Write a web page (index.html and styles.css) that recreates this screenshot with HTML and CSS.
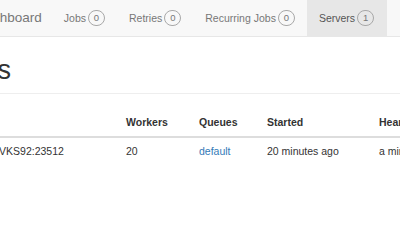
FILE: index.html
```html
<!DOCTYPE html>
<html>
<head>
<meta charset="utf-8">
<link rel="stylesheet" href="styles.css">
</head>
<body>
<nav class="navbar">
  <div class="navbar-inner">
    <a class="brand" href="#">Hangfire Dashboard</a>
    <ul class="nav">
      <li><a href="#">Jobs<span class="badge">0</span></a></li>
      <li><a href="#">Retries<span class="badge">0</span></a></li>
      <li><a href="#">Recurring Jobs<span class="badge">0</span></a></li>
      <li class="active"><a href="#">Servers<span class="badge">1</span></a></li>
    </ul>
  </div>
</nav>
<main class="container">
  <h1 class="page-header">Servers</h1>
  <table class="table">
    <colgroup>
      <col class="c-name"><col class="c-workers"><col class="c-queues"><col class="c-started"><col class="c-heart">
    </colgroup>
    <thead>
      <tr><th>Name</th><th>Workers</th><th>Queues</th><th>Started</th><th>Heartbeat</th></tr>
    </thead>
    <tbody>
      <tr><td>DESKTOP-ABCVKS92:23512</td><td>20</td><td><a href="#">default</a></td><td>20 minutes ago</td><td>a minute ago</td></tr>
    </tbody>
  </table>
</main>
</body>
</html>
```
FILE: styles.css
```css
html, body {
  margin: 0;
  padding: 0;
  overflow: hidden;
  background: #fff;
}
body {
  font-family: "Liberation Sans", Arial, sans-serif;
  font-size: 10.5px;
  line-height: 15px;
  color: #333;
  width: 400px;
  height: 250px;
}
a { text-decoration: none; }

.navbar {
  background: #f8f8f8;
  border-bottom: 1px solid #e7e7e7;
  height: 36px;
  white-space: nowrap;
}
.navbar-inner {
  display: flex;
  align-items: stretch;
  height: 36px;
  margin-left: -79px;
}
.brand {
  font-size: 13.5px;
  line-height: 36px;
  color: #777;
  padding: 0 10px 0 0;
}
.nav {
  display: flex;
  list-style: none;
  margin: 0;
  padding: 0;
}
.nav li a {
  display: flex;
  align-items: center;
  height: 36px;
  padding: 0 12px;
  color: #777;
}
.nav li.active a {
  background: #e7e7e7;
  color: #555;
  padding-right: 13px;
}
.badge {
  display: inline-flex;
  align-items: center;
  justify-content: center;
  box-sizing: border-box;
  width: 17px;
  height: 16px;
  margin-left: 2px;
  border: 1px solid #a8a8a8;
  border-radius: 8px;
  font-size: 9.5px;
  line-height: 1;
  color: #777;
  background: transparent;
}

.container {
  margin-left: -82px;
  width: 700px;
}
.page-header {
  margin: 19px 0 15px 0;
  padding-bottom: 7px;
  border-bottom: 1px solid #eee;
  font-size: 27px;
  font-weight: 500;
  line-height: 29.7px;
  color: #333;
}
.table {
  border-collapse: collapse;
  table-layout: fixed;
  width: 655px;
}
.c-name { width: 202px; }
.c-workers { width: 73px; }
.c-queues { width: 68px; }
.c-started { width: 112px; }
.c-heart { width: 200px; }
.table th, .table td {
  text-align: left;
  padding: 6px;
  line-height: 15px;
  white-space: nowrap;
  overflow: hidden;
}
.table th {
  font-weight: bold;
  border-bottom: 2px solid #ddd;
}
.table td {
  border-top: 1px solid #ddd;
}
.table thead + tbody tr:first-child td { border-top: 0; }
.table td a { color: #337ab7; }
```
